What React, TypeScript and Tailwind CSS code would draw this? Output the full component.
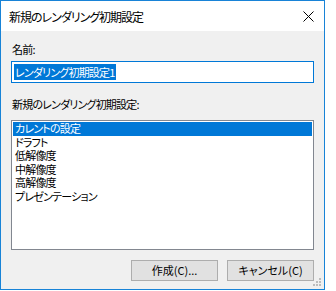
import React from 'react';

const items = ['カレントの設定', 'ドラフト', '低解像度', '中解像度', '高解像度', 'プレゼンテーション'];

const App: React.FC = () => {
  const selected = 0;

  return (
    <div
      className="w-[336px] h-[291px] bg-white text-[11px] text-black [font-feature-settings:'palt']"
      style={{ fontFamily: '"Noto Sans CJK JP", "Noto Sans", sans-serif' }}
    >
      <div className="relative w-[325px] h-[290px] border border-[#1883d7] flex flex-col">
        {/* Title bar */}
        <div className="h-[30px] bg-white flex items-center justify-between pl-[8px] pr-[10px]">
          <span className="text-[12px] tracking-[-1px] leading-[16px] pt-[1px]">新規のレンダリング初期設定</span>
          <svg width="11" height="11" viewBox="0 0 11 11" className="mt-[1px]">
            <path d="M0.5 0.5 L10.5 10.5 M10.5 0.5 L0.5 10.5" stroke="#000" strokeWidth="1" />
          </svg>
        </div>

        {/* Body */}
        <div className="flex-1 bg-[#f0f0f0] px-[10px] pt-[10px] pb-[8px] flex flex-col">
          <div className="leading-[16px] pl-[1px] tracking-[-0.8px]">名前:</div>
          <div className="mt-[4px] h-[22px] bg-white border border-[#0078d7] flex items-center pl-[2px]">
            <span className="bg-[#0078d7] text-white leading-[16px] px-[1px] tracking-[-0.8px]">
              レンダリング初期設定1
            </span>
          </div>

          <div className="mt-[13px] leading-[16px] pl-[1px] tracking-[-0.8px]">新規のレンダリング初期設定:</div>
          <div className="mt-[8px] h-[130px] bg-white border border-[#828790] p-[1px] tracking-[-0.8px]">
            {items.map((item, i) => (
              <div
                key={i}
                className={`h-[13.5px] leading-[13.5px] pl-[2px] ${
                  i === selected ? 'bg-[#0078d7] text-white' : ''
                }`}
              >
                {item}
              </div>
            ))}
          </div>

          <div className="mt-[10px] flex justify-end gap-[9px]">
            <button className="w-[87px] h-[21px] bg-[#e1e1e1] border border-[#adadad] leading-[19px] text-center">
              作成(C)...
            </button>
            <button className="w-[87px] h-[21px] bg-[#e1e1e1] border border-[#adadad] leading-[19px] text-center">
              キャンセル(C)
            </button>
          </div>
        </div>

        {/* Size grip */}
        <svg width="10" height="10" viewBox="0 0 10 10" className="absolute right-[2px] bottom-[2px]">
          {[
            [7, 1],
            [4, 4],
            [7, 4],
            [1, 7],
            [4, 7],
            [7, 7],
          ].map(([x, y], i) => (
            <rect key={i} x={x} y={y} width="2" height="2" fill="#bcbcbc" />
          ))}
        </svg>
      </div>
    </div>
  );
};

export default App;
